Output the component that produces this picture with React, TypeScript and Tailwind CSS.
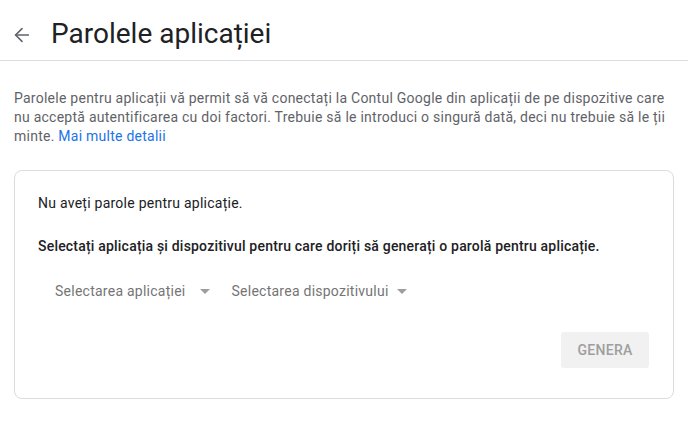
import { ArrowLeft } from 'lucide-react'

export default function App() {
  return (
    <div className="w-[688px] h-[424px] bg-white overflow-hidden font-['Roboto',sans-serif]">
      <header className="flex items-center h-[61px] border-b border-[#dadce0]">
        <button className="ml-[11px] mt-[9px] w-[22px] h-[22px] flex items-center justify-center text-[#5f6368]">
          <ArrowLeft className="w-[22px] h-[22px]" strokeWidth={1.7} />
        </button>
        <h1 className="ml-[18px] mt-[8px] text-[28px] leading-[36px] text-[#202124] font-['Roboto',sans-serif]">
          Parolele aplicației
        </h1>
      </header>

      <p className="px-[14px] pt-[28px] pr-[20px] text-[14px] leading-[19px] tracking-[0.25px] text-[#5f6368]">
        Parolele pentru aplicații vă permit să vă conectați la Contul Google din aplicații de pe dispozitive care
        nu acceptă autentificarea cu doi factori. Trebuie să le introduci o singură dată, deci nu trebuie să le ții
        minte. <a className="text-[#1a73e8]">Mai multe detalii</a>
      </p>

      <section className="mx-[14px] mt-[24px] w-[660px] h-[229px] border border-[#dadce0] rounded-[8px] px-[23px] pt-[22px]">
        <p className="text-[14px] leading-[20px] tracking-[0.25px] text-[#202124]">Nu aveți parole pentru aplicație.</p>
        <p className="mt-[23px] text-[14px] leading-[20px] font-medium tracking-[0.2px] text-[#202124]">
          Selectați aplicația și dispozitivul pentru care doriți să generați o parolă pentru aplicație.
        </p>
        <div className="flex items-center mt-[25px] ml-[17px] gap-[22px] text-[14px] leading-[20px] tracking-[0.25px] text-[#757575]">
          <div className="flex items-center gap-[14px]">
            <span>Selectarea aplicației</span>
            <span className="w-0 h-0 border-l-[5px] border-r-[5px] border-t-[5px] border-l-transparent border-r-transparent border-t-[#9e9e9e]" />
          </div>
          <div className="flex items-center gap-[8px]">
            <span>Selectarea dispozitivului</span>
            <span className="w-0 h-0 border-l-[5px] border-r-[5px] border-t-[5px] border-l-transparent border-r-transparent border-t-[#9e9e9e]" />
          </div>
        </div>
        <div className="flex justify-end mt-[31px] pr-[1px]">
          <button className="w-[88px] h-[36px] rounded-[3px] bg-[#f1f1f1] text-[14px] font-medium text-[#9e9e9e] tracking-[0.3px]">
            GENERA
          </button>
        </div>
      </section>
    </div>
  )
}
